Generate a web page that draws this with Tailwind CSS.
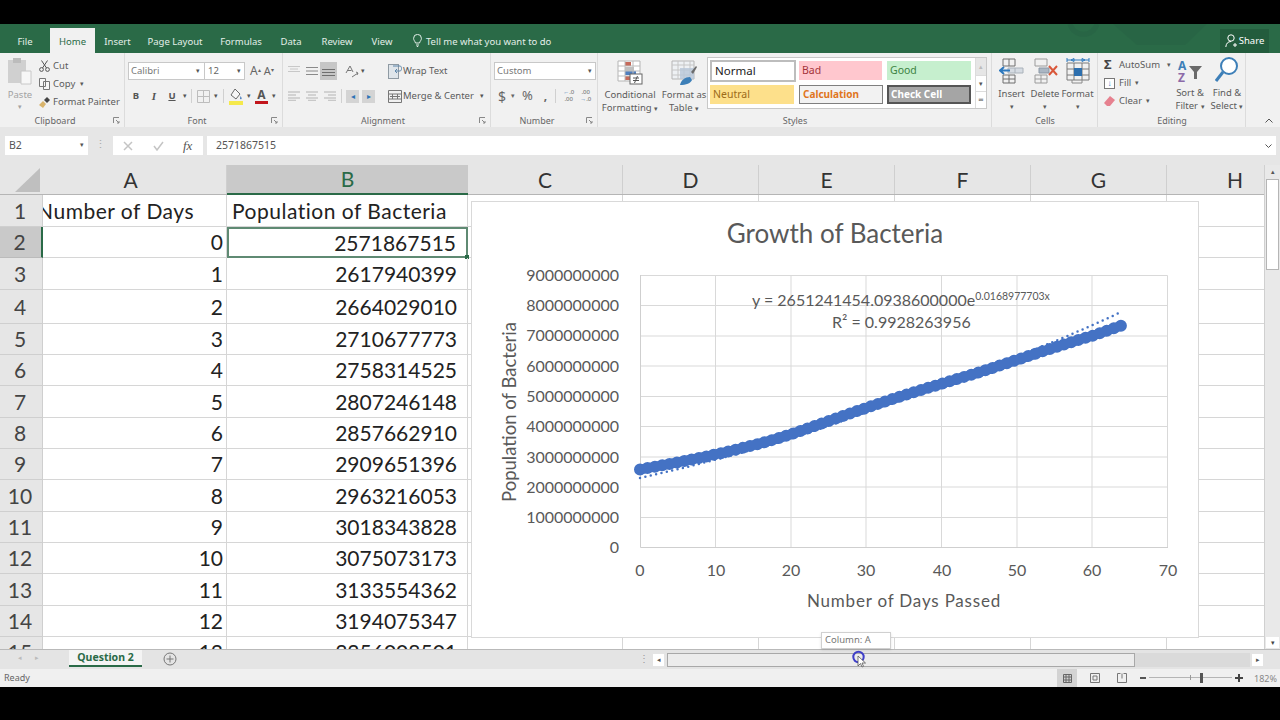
<!DOCTYPE html>
<html lang="en">
<head>
    <meta charset="UTF-8">
    <meta name="viewport" content="width=device-width, initial-scale=1.0">
    <title>Growth of Bacteria - Excel</title>
    <script src="https://cdn.jsdelivr.net/npm/@tailwindcss/browser@4"></script>
</head>
<body class="bg-black">
<div class="relative w-[1280px] h-[720px] overflow-hidden flex flex-col bg-black font-['Noto_Sans',sans-serif] text-[9.5px] text-[#555]">
    <div class="h-[24px] shrink-0"></div>

    <!-- tabs -->
    <div class="relative h-[29px] shrink-0 bg-[#2a6a47] flex text-[#e4efe9] text-[9.5px] overflow-hidden">
        <svg class="absolute left-[1000px] top-0 w-[280px] h-[29px]" viewBox="0 0 280 29" fill="none"><path d="M70 0a14 14 0 0 0 27 0" stroke="#286545" stroke-width="5"/><path d="M113 0l24 21h48l22-21z" fill="#286545"/></svg>
        <div class="w-[50px] pt-[11px] text-center">File</div>
        <div class="w-[45px] mt-[4px] pt-[7px] text-center bg-[#f1f1f1] text-[#2a6a47]">Home</div>
        <div class="w-[45px] pt-[11px] text-center">Insert</div>
        <div class="w-[70px] pt-[11px] text-center">Page Layout</div>
        <div class="w-[62px] pt-[11px] text-center">Formulas</div>
        <div class="w-[38px] pt-[11px] text-center">Data</div>
        <div class="w-[54px] pt-[11px] text-center">Review</div>
        <div class="w-[36px] pt-[11px] text-center">View</div>
        <div class="ml-[13px] pt-[11px] flex items-start gap-[4px] h-fit">
            <svg class="w-[9px] h-[13px] mt-[-1px]" viewBox="0 0 9 13" fill="none" stroke="#e4efe9"><path d="M2.5 9C2 7 .6 6.500 .6 4.300a3.900 3.900 0 0 1 7.800 0C8.400 6.500 7 7 6.500 9zM3 11h3M3.800 12.500h1.400"/></svg>
            <span class="whitespace-nowrap">Tell me what you want to do</span>
        </div>
        <div class="absolute left-[1220px] top-[5px] w-[49px] h-[24px] bg-[#235c3d] flex items-center justify-center gap-[2px] text-white">
            <svg class="w-[12px] h-[14px]" viewBox="0 0 12 14" fill="none" stroke="#fff"><circle cx="6" cy="4" r="3.200"/><path d="M.8 13c.3-3.500 2.200-5.500 5.200-5.500M8 11h4M10 9v4"/></svg>
            <span>Share</span>
        </div>
    </div>

    <!-- ribbon -->
    <div class="relative h-[74px] shrink-0 bg-[#f1f1f1] flex">
        <!-- clipboard -->
        <div class="relative w-[125px] h-full border-r border-[#dcdcdc] flex flex-col">
            <div class="flex h-[60px]">
                <div class="w-[39px] flex flex-col items-center pt-[5px] pl-[1px] text-[#a3a3a3]">
                    <svg class="w-[24px] h-[27px]" viewBox="0 0 24 27"><rect x="0" y="2" width="18" height="23" fill="#d0d0d0"/><rect x="5" y="0" width="8" height="5" fill="#bcbcbc"/><path d="M13 13h10v13H13z" fill="#f7f7f7" stroke="#c8c8c8"/></svg>
                    <span class="mt-[3px] leading-[13px]">Paste</span>
                    <span class="text-[7px] leading-[12px]">▾</span>
                </div>
                <div class="flex flex-col pt-[4px] text-[#5b5b5b]">
                    <div class="h-[18px] flex items-center gap-[3px]"><svg class="w-[11px] h-[12px]" viewBox="0 0 11 12" fill="none" stroke="#555"><circle cx="2.500" cy="9.500" r="1.900"/><circle cx="8.500" cy="9.500" r="1.900"/><path d="M3.500 8L8.500 .5M7.500 8L2.500 .5"/></svg>Cut</div>
                    <div class="h-[18px] flex items-center gap-[3px]"><svg class="w-[11px] h-[12px]" viewBox="0 0 11 12" fill="#f7f7f7" stroke="#777"><path d="M.5.5h6v8h-6zM4.500 3.500h6v8h-6z"/></svg>Copy <span class="text-[7px] ml-[2px]">▾</span></div>
                    <div class="h-[18px] flex items-center gap-[3px]"><svg class="w-[11px] h-[11px]" viewBox="0 0 11 11"><path d="M0 8l4-4 3 3-3 4z" fill="#d9b46c"/><path d="M5 3l3-3 3 3-3 3z" fill="#444"/></svg>Format Painter</div>
                </div>
            </div>
            <div class="absolute left-0 w-[110px] top-[61px] text-center text-[9px] text-[#666]">Clipboard</div>
            <svg class="absolute right-[4px] top-[64px] w-[7px] h-[7px]" viewBox="0 0 7 7" fill="none" stroke="#888"><path d="M.5 6V.5H6M3 3l3 3M6 4v2H4"/></svg>
        </div>

        <!-- font -->
        <div class="relative w-[158px] h-full border-r border-[#dcdcdc] pl-[3px]">
            <div class="flex items-center mt-[9px] h-[18px]">
                <div class="w-[77px] h-[18px] bg-white border border-[#c8c8c8] flex items-center justify-between px-[2px] text-[#777]"><span>Calibri</span><span class="text-[7px] text-[#555] mr-[2px]">▾</span></div>
                <div class="w-[40px] h-[18px] bg-white border border-l-0 border-[#c8c8c8] flex items-center justify-between px-[3px] text-[#666]"><span>12</span><span class="text-[7px] text-[#555]">▾</span></div>
                <span class="ml-[5px] text-[12px] text-[#666]">A<sup class="text-[6px]">▴</sup></span>
                <span class="ml-[3px] text-[11px] text-[#666]">A<sup class="text-[6px]">▾</sup></span>
            </div>
            <div class="flex items-center mt-[7px] h-[18px] text-[#555]">
                <span class="w-[12px] ml-[2px] text-center font-bold">B</span>
                <span class="w-[12px] ml-[6px] text-center italic font-bold font-['Liberation_Serif',serif] text-[11px]">I</span>
                <span class="w-[12px] ml-[6px] text-center font-bold underline">U</span>
                <span class="w-[9px] ml-[2px] text-center text-[7px]">▾</span>
                <span class="w-px h-[14px] ml-[2px] bg-[#d0d0d0]"></span>
                <svg class="w-[13px] h-[13px] ml-[5px]" viewBox="0 0 13 13" fill="none" stroke="#bdbdbd"><path d="M.5.5h12v12H.5zM6.500.5v12M.5 6.500h12"/></svg>
                <span class="w-[9px] ml-[1px] text-center text-[7px]">▾</span>
                <span class="w-px h-[14px] ml-[3px] bg-[#d0d0d0]"></span>
                <svg class="w-[14px] h-[17px] ml-[5px]" viewBox="0 0 14 17"><path d="M6 1l5 5-4 5-5-4z" fill="#f6f6f6" stroke="#6a6a6a"/><path d="M11.500 8c1 1.500 1.500 2.200 1 3-.6.600-1.600.2-1.500-.8z" fill="#4f80bf"/><rect y="13" width="14" height="4" fill="#f5e94b"/></svg>
                <span class="w-[9px] ml-[1px] text-center text-[7px]">▾</span>
                <div class="w-[13px] ml-[2px] flex flex-col items-center leading-[12px] text-[12px] font-bold text-[#555]">A<span class="w-[13px] h-[3px] bg-[#c2161c]"></span></div>
                <span class="w-[9px] ml-[1px] text-center text-[7px]">▾</span>
            </div>
            <div class="absolute left-0 w-[144px] top-[61px] text-center text-[9px] text-[#666]">Font</div>
            <svg class="absolute right-[4px] top-[64px] w-[7px] h-[7px]" viewBox="0 0 7 7" fill="none" stroke="#888"><path d="M.5 6V.5H6M3 3l3 3M6 4v2H4"/></svg>
        </div>

        <!-- alignment -->
        <div class="relative w-[208px] h-full border-r border-[#dcdcdc] pl-[4px]">
            <div class="flex items-center mt-[9px] h-[18px]">
                <svg class="w-[14px] h-[10px]" viewBox="0 0 14 10" stroke="#c8c8c8"><path d="M1 .5h12M3 3h8M1 5.500h12"/></svg>
                <svg class="w-[14px] h-[10px] ml-[4px]" viewBox="0 0 14 10" stroke="#8a8a8a"><path d="M1 1.500h12M1 5h12M1 8.500h12"/></svg>
                <div class="w-[17px] h-[18px] ml-[1px] bg-[#c6c6c6] flex items-center justify-center"><svg class="w-[13px] h-[10px]" viewBox="0 0 13 10" stroke="#6f6f6f"><path d="M0 3.500h13M0 6.500h13M0 9.500h13"/></svg></div>
                <svg class="w-[14px] h-[13px] ml-[8px]" viewBox="0 0 14 13" fill="none" stroke="#777"><path d="M1 8l4-7 3 6M2.500 5.500h4M7 12l6-4M11 7l2 1-1 2" /></svg>
                <span class="text-[7px] ml-[2px]">▾</span>
                <svg class="w-[14px] h-[15px] ml-[23px]" viewBox="0 0 14 15" fill="#dfe5ea" stroke="#8f9aa3"><rect x=".5" y=".5" width="10" height="14"/><path d="M5 2h7c2 0 2 5 0 5H7l2-2M7 7l2 2" fill="none" stroke="#5e86aa"/></svg>
                <span class="ml-[1px] text-[#5b5b5b]">Wrap Text</span>
            </div>
            <div class="flex items-center mt-[7px] h-[18px]">
                <svg class="w-[14px] h-[10px]" viewBox="0 0 14 10" stroke="#c8c8c8" stroke-width="1.500"><path d="M1 1h12M1 4h8M1 7h12M1 9.500h8"/></svg>
                <svg class="w-[14px] h-[10px] ml-[4px]" viewBox="0 0 14 10" stroke="#c8c8c8" stroke-width="1.500"><path d="M1 1h12M3 4h8M1 7h12M3 9.500h8"/></svg>
                <svg class="w-[14px] h-[10px] ml-[4px]" viewBox="0 0 14 10" stroke="#c8c8c8" stroke-width="1.500"><path d="M1 1h12M5 4h8M1 7h12M5 9.500h8"/></svg>
                <span class="w-px h-[14px] ml-[4px] bg-[#d0d0d0]"></span>
                <div class="w-[13px] h-[13px] ml-[4px] bg-[#d4d4d4] flex items-center justify-center text-[8px] text-[#2d73b6]">◂</div>
                <div class="w-[13px] h-[13px] ml-[3px] bg-[#d4d4d4] flex items-center justify-center text-[8px] text-[#2d73b6]">▸</div>
                <svg class="w-[14px] h-[13px] ml-[13px]" viewBox="0 0 14 13" fill="none" stroke="#777"><path d="M.5.5h13v12H.5zM.5 4h13M.5 9h13M4.500 4v5M9.500 4v5M2 6.500h10"/></svg>
                <span class="ml-[1px] text-[#5b5b5b] whitespace-nowrap">Merge &amp; Center</span>
                <span class="text-[7px] ml-[6px]">▾</span>
            </div>
            <div class="absolute left-0 w-[200px] top-[61px] text-center text-[9px] text-[#666]">Alignment</div>
            <svg class="absolute right-[4px] top-[64px] w-[7px] h-[7px]" viewBox="0 0 7 7" fill="none" stroke="#888"><path d="M.5 6V.5H6M3 3l3 3M6 4v2H4"/></svg>
        </div>

        <!-- number -->
        <div class="relative w-[107px] h-full border-r border-[#dcdcdc] pl-[3px]">
            <div class="w-[102px] h-[18px] mt-[9px] bg-white border border-[#c8c8c8] flex items-center justify-between px-[2px] text-[#777]"><span>Custom</span><span class="text-[7px] text-[#555] mr-[1px]">▾</span></div>
            <div class="flex items-center mt-[7px] h-[18px] text-[#666]">
                <span class="ml-[4px] text-[14px]">$</span>
                <span class="ml-[5px] text-[7px]">▾</span>
                <span class="ml-[7px] text-[13px]">%</span>
                <span class="ml-[11px] text-[12px] font-bold leading-[10px]">,</span>
                <span class="w-px h-[14px] ml-[8px] bg-[#d0d0d0]"></span>
                <span class="ml-[7px] w-[11px] text-[6px] leading-[7px] text-center whitespace-nowrap"><span class="text-[#3f78b4]">←</span>.0<br>.00</span>
                <span class="ml-[6px] w-[11px] text-[6px] leading-[7px] text-center whitespace-nowrap">.00<br><span class="text-[#3f78b4]">→</span>.0</span>
            </div>
            <div class="absolute left-0 w-[92px] top-[61px] text-center text-[9px] text-[#666]">Number</div>
            <svg class="absolute right-[4px] top-[64px] w-[7px] h-[7px]" viewBox="0 0 7 7" fill="none" stroke="#888"><path d="M.5 6V.5H6M3 3l3 3M6 4v2H4"/></svg>
        </div>

        <!-- styles -->
        <div class="relative w-[394px] h-full border-r border-[#dcdcdc] flex">
            <div class="w-[60px] flex flex-col items-center pt-[7px] ml-[2px] text-[#5b5b5b] leading-[13px] text-center">
                <svg class="w-[26px] h-[25px]" viewBox="0 0 26 25"><path d="M1 1h22v20H1z" fill="#fff" stroke="#b5b5b5"/><rect x="8" y="2" width="6" height="4" fill="#c66a5a"/><rect x="8" y="7" width="9" height="4" fill="#c0c0c0"/><rect x="8" y="11" width="11" height="4" fill="#4f7fbf"/><rect x="8" y="16" width="5" height="4" fill="#c66a5a"/><path d="M8 1v20M16 1v20M1 6h22M1 11h22M1 16h22" stroke="#bdbdbd" fill="none"/><rect x="13" y="14" width="12" height="10" fill="#fff" stroke="#666"/><path d="M16 18h6M16 20.500h6M20.500 16l-3 7" stroke="#555"/></svg>
                <span class="mt-[3px]">Conditional</span>
                <span class="whitespace-nowrap">Formatting <span class="text-[7px]">▾</span></span>
            </div>
            <div class="w-[48px] flex flex-col items-center pt-[7px] text-[#5b5b5b] leading-[13px] text-center">
                <svg class="w-[26px] h-[25px]" viewBox="0 0 26 25"><path d="M1 1h22v18H1z" fill="#eef1f4" stroke="#b5b5b5"/><path d="M1 5h22M1 10h22M1 15h22M7 1v18M13 1v18M19 1v18" stroke="#c6c6c6"/><path d="M9 8h14v11H9z" fill="#b8c7d8" opacity=".8"/><path d="M20 12l5-6 1 1-4 7z" fill="#6b6b6b"/><path d="M9 25c1-5 5-8 10-8l2 3c-1 3-6 5-12 5z" fill="#3d7fb8"/></svg>
                <span class="mt-[3px] whitespace-nowrap">Format as</span>
                <span class="whitespace-nowrap">Table <span class="text-[7px]">▾</span></span>
            </div>
            <div class="w-[280px] h-[52px] mt-[4px] ml-[-1px] bg-white border border-[#c8c8c8] pl-[2px] flex">
                <div class="w-[266px] grid grid-cols-[90px_88px_84px] grid-rows-[26px_24px] pt-[2px] text-[11.500px]">
                    <div class="w-[86px] h-[22px] border-2 border-[#bdbdbd] flex items-center pl-[3px] text-[#222]">Normal</div>
                    <div class="w-[83px] h-[19px] mt-[1px] ml-[-1px] bg-[#ffc7ce] flex items-center pl-[3px] text-[#a4343a] text-[10.500px]">Bad</div>
                    <div class="w-[84px] h-[19px] mt-[1px] ml-[-1px] bg-[#c6efce] flex items-center pl-[3px] text-[#3c8242] text-[10.500px]">Good</div>
                    <div class="w-[84px] h-[19px] mt-[-1px] bg-[#fde08b] flex items-center pl-[3px] text-[#9c6b19] text-[10.500px]">Neutral</div>
                    <div class="w-[84px] h-[19px] mt-[-1px] ml-[-1px] bg-[#f2f2f2] border border-[#7f7f7f] flex items-center pl-[3px] text-[#e0761e] text-[10px] font-bold">Calculation</div>
                    <div class="w-[84px] h-[19px] mt-[-1px] ml-[-1px] bg-[#a5a5a5] border-2 border-double border-[#555] flex items-center pl-[2px] text-white text-[10px] font-bold">Check Cell</div>
                </div>
                <div class="w-[11px] h-full ml-auto flex flex-col text-[7px] text-center text-[#555] border-l border-[#dcdcdc]">
                    <span class="h-[17px] bg-[#e6e6e6] text-[#bbb] leading-[17px]">▴</span>
                    <span class="h-[17px] border-y border-[#dcdcdc] leading-[15px]">▾</span>
                    <span class="h-[16px] leading-[16px]">≂</span>
                </div>
            </div>
            <div class="absolute left-0 w-[394px] top-[61px] text-center text-[9px] text-[#666]">Styles</div>
        </div>

        <!-- cells -->
        <div class="relative w-[106px] h-full border-r border-[#dcdcdc] flex text-[#5b5b5b] leading-[13px] text-center">
            <div class="w-[35px] ml-[2px] flex flex-col items-center pt-[5px]">
                <svg class="w-[25px] h-[26px]" viewBox="0 0 25 26" fill="none"><path d="M4 1h12v7H4zM4 17h12v8H4zM4 21h12M10 17v8M10 1v7" stroke="#6f6f6f"/><path d="M9 10h15v5H9zM16 10v5" fill="#d5dbe2" stroke="#aab2ba"/><path d="M11 12.500H1M5 9l-4 3.500L5 16" stroke="#2d78bd" stroke-width="2"/></svg>
                <span class="mt-[3px]">Insert</span><span class="text-[7px] leading-[14px]">▾</span>
            </div>
            <div class="w-[32px] flex flex-col items-center pt-[5px]">
                <svg class="w-[25px] h-[26px]" viewBox="0 0 25 26" fill="none"><path d="M2 1h12v7H2zM2 17h12v8H2zM2 21h12M8 17v8" stroke="#9b9b9b"/><path d="M6 10h10v5H6z" fill="#aab6c3" stroke="#8a97a5"/><path d="M16 8l8 9M24 8l-8 9" stroke="#d9573a" stroke-width="2"/></svg>
                <span class="mt-[3px]">Delete</span><span class="text-[7px] leading-[14px]">▾</span>
            </div>
            <div class="w-[33px] flex flex-col items-center pt-[4px]">
                <svg class="w-[24px] h-[27px]" viewBox="0 0 24 27" fill="none"><path d="M1 3h22M1 1v4M23 1v4M5 3l3-1.500v3zM19 3l-3-1.500v3z" stroke="#2d78bd"/><path d="M1 6h22v17H1zM1 12h22M1 18h22M8 6v17M16 6v17" stroke="#7a7a7a"/><rect x="8" y="11" width="8" height="8" fill="#2d6fae"/><path d="M6 23v3h10v-3" stroke="#8a8a8a"/></svg>
                <span class="mt-[3px]">Format</span><span class="text-[7px] leading-[14px]">▾</span>
            </div>
            <div class="absolute left-0 w-[106px] top-[61px] text-center text-[9px] text-[#666]">Cells</div>
        </div>

        <!-- editing -->
        <div class="relative w-[148px] h-full border-r border-[#dcdcdc] flex text-[#5b5b5b]">
            <div class="w-[75px] pl-[6px] pt-[3px]">
                <div class="h-[18px] flex items-center gap-[4px] whitespace-nowrap"><span class="text-[13px] font-bold text-[#444] w-[11px]">Σ</span>AutoSum<span class="text-[7px] ml-[3px]">▾</span></div>
                <div class="h-[18px] flex items-center gap-[4px] whitespace-nowrap"><span class="w-[11px] h-[11px] border border-[#777] bg-white flex items-center justify-center text-[8px] leading-none text-[#2d78bd]">↓</span>Fill <span class="text-[7px]">▾</span></div>
                <div class="h-[18px] flex items-center gap-[4px] whitespace-nowrap"><svg class="w-[11px] h-[10px]" viewBox="0 0 11 10"><path d="M0 7l6-7 5 4-5 6H3z" fill="#e6818f"/></svg>Clear <span class="text-[7px]">▾</span></div>
            </div>
            <div class="w-[36px] ml-[-1px] flex flex-col items-center pt-[6px] leading-[13px] text-center">
                <svg class="w-[24px] h-[25px] overflow-visible" viewBox="0 0 24 25"><text x="0" y="10.500" class="text-[12px] fill-[#3d7fb8] font-bold">A</text><text x="0" y="23" class="text-[12px] fill-[#8c6aa8] font-bold">Z</text><path d="M11 7h13l-5 6v7h-3v-7z" fill="#6a6a6a"/></svg>
                <span class="mt-[2px] whitespace-nowrap">Sort &amp;</span>
                <span class="whitespace-nowrap">Filter <span class="text-[7px]">▾</span></span>
            </div>
            <div class="w-[36px] ml-[1px] flex flex-col items-center pt-[3px] leading-[13px] text-center">
                <svg class="w-[24px] h-[28px]" viewBox="0 0 24 28" fill="none"><circle cx="14" cy="10" r="8" stroke="#3d7fb8" stroke-width="2" fill="#fff"/><path d="M8 16L1 25" stroke="#3d7fb8" stroke-width="3"/></svg>
                <span class="mt-[2px] whitespace-nowrap">Find &amp;</span>
                <span class="whitespace-nowrap">Select <span class="text-[7px]">▾</span></span>
            </div>
            <div class="absolute left-0 w-[148px] top-[61px] text-center text-[9px] text-[#666]">Editing</div>
        </div>
        <svg class="absolute left-[1265px] top-[65px] w-[8px] h-[5px]" viewBox="0 0 8 5" fill="none" stroke="#555"><path d="M.5 4.500L4 1l3.500 3.500"/></svg>
    </div>

    <!-- formula bar -->
    <div class="h-[38px] shrink-0 bg-[#e6e6e6] flex pt-[9px] text-[10.500px] text-[#555]">
        <div class="w-[83px] h-[19px] ml-[5px] bg-white flex items-center justify-between px-[4px]"><span>B2</span><span class="text-[7px]">▾</span></div>
        <div class="w-[25px] text-center leading-[17px] text-[#aaa]">⋮</div>
        <div class="w-[90px] h-[19px] bg-white flex items-center text-[#c4c4c4]">
            <svg class="w-[10px] h-[10px] ml-[10px]" viewBox="0 0 10 10" fill="none" stroke="#c4c4c4" stroke-width="1.500"><path d="M1 1l8 8M9 1l-8 8"/></svg>
            <svg class="w-[11px] h-[10px] ml-[20px]" viewBox="0 0 11 10" fill="none" stroke="#c4c4c4" stroke-width="1.500"><path d="M1 5l3 4 6-8"/></svg>
            <span class="ml-[19px] text-[13px] italic font-['Liberation_Serif',serif] text-[#555]">fx</span>
        </div>
        <div class="w-[1069px] h-[19px] ml-[4px] bg-white flex items-center justify-between pl-[9px] pr-[4px]"><span>2571867515</span><svg class="w-[7px] h-[4px]" viewBox="0 0 7 4" fill="none" stroke="#555"><path d="M.5.5L3.500 3.500 6.500.5"/></svg></div>
    </div>

    <!-- sheet -->
    <div class="h-[484px] shrink-0 flex bg-white">
        <div class="w-[1264px] h-full overflow-hidden font-['Lato',sans-serif] text-[21px] text-[#222]">
            <div class="flex h-[30px] bg-[#e6e6e6] text-[#333] border-b border-[#b5b5b5]">
                <div class="w-[43px] h-full shrink-0 pl-[15px] pt-[3px]">
                    <svg class="w-[25px] h-[24px]" viewBox="0 0 25 24"><path d="M25 0v24H0z" fill="#bfbfbf"/></svg>
                </div>
                <div class="w-[184px] shrink-0 flex items-center justify-center pr-[8px] border-r border-[#cfcfcf]">A</div>
                <div class="w-[241px] shrink-0 flex items-center justify-center bg-[#c9c9c9] text-[#2a6a47] border-b-2 border-[#2a6a47] h-[30px]">B</div>
                <div class="w-[155px] shrink-0 flex items-center justify-center border-r border-[#cfcfcf]">C</div>
                <div class="w-[136px] shrink-0 flex items-center justify-center border-r border-[#cfcfcf]">D</div>
                <div class="w-[136px] shrink-0 flex items-center justify-center border-r border-[#cfcfcf]">E</div>
                <div class="w-[136px] shrink-0 flex items-center justify-center border-r border-[#cfcfcf]">F</div>
                <div class="w-[136px] shrink-0 flex items-center justify-center border-r border-[#cfcfcf]">G</div>
                <div class="w-[136px] shrink-0 flex items-center justify-center">H</div>
            </div>
            <div id="rows"></div>
        </div>
        <!-- vertical scrollbar -->
        <div class="w-[16px] h-full bg-[#e9e9e9] flex flex-col items-center border-l border-[#d0d0d0]">
            <div class="h-[14px] text-[7px] leading-[14px] text-[#555]">▴</div>
            <div class="w-[13px] h-[91px] bg-white border border-[#b5b5b5]"></div>
            <div class="mt-auto w-[13px] h-[11px] mb-[1px] bg-white text-[7px] leading-[11px] text-center text-[#444]">▾</div>
        </div>
    </div>

    <!-- sheet tabs -->
    <div class="h-[20px] shrink-0 bg-[#e4e4e4] border-t border-[#b9b9b9] flex items-start relative">
        <span class="ml-[18px] mt-[3px] text-[7px] text-[#bbb]">◂</span>
        <span class="ml-[13px] mt-[3px] text-[7px] text-[#bbb]">▸</span>
        <div class="ml-[30px] w-[73px] h-[17px] bg-[#f4f4f4] border-b-2 border-[#2a6a47] flex items-center justify-center font-bold text-[#2a6a47] text-[10.500px]">Question 2</div>
        <svg class="ml-[21px] mt-[2px] w-[14px] h-[14px]" viewBox="0 0 14 14" fill="none" stroke="#777"><circle cx="7" cy="7" r="6"/><path d="M7 3.500v7M3.500 7h7"/></svg>
        <span class="absolute left-[639px] top-[2px] leading-[14px] text-[#999]">⋮</span>
        <div class="absolute left-[653px] top-[4px] w-[11px] h-[12px] bg-white text-[7px] leading-[12px] text-center">◂</div>
        <div class="absolute left-[667px] top-[3px] w-[468px] h-[14px] bg-[#ececec] border border-[#a8a8a8]"></div>
        <div class="absolute left-[1135px] top-[3px] w-[115px] h-[14px] bg-[#dadada]"></div>
        <div class="absolute left-[1252px] top-[4px] w-[11px] h-[12px] bg-white text-[7px] leading-[12px] text-center">▸</div>
    </div>

    <!-- status bar -->
    <div class="relative h-[18px] shrink-0 bg-[#f0f0f0] flex items-center pl-[4px] text-[9px] text-[#666]">
        <span>Ready</span>
        <div class="absolute left-[1057px] top-0 w-[20px] h-[18px] bg-[#d3d3d3] flex items-center justify-center"><svg class="w-[9px] h-[9px]" viewBox="0 0 9 9" fill="none" stroke="#666"><path d="M.5.5h8v8h-8zM3 .5v8M6 .5v8M.5 3h8M.5 6h8"/></svg></div>
        <svg class="absolute left-[1090px] top-[4px] w-[10px] h-[10px]" viewBox="0 0 10 10" fill="none" stroke="#777"><path d="M.5.5h9v9h-9zM3 3h4v4H3z"/></svg>
        <svg class="absolute left-[1117px] top-[4px] w-[10px] h-[10px]" viewBox="0 0 10 10" fill="none" stroke="#777"><path d="M.5.5v9h9V.5M.5.5h3M9.500.5h-3M5 .5v5"/></svg>
        <span class="absolute left-[1140px] top-[8px] w-[6px] h-[2px] bg-[#555]"></span>
        <span class="absolute left-[1149px] top-[8px] w-[83px] h-px bg-[#b5b5b5]"></span>
        <span class="absolute left-[1190px] top-[6px] w-px h-[5px] bg-[#999]"></span>
        <span class="absolute left-[1200px] top-[4px] w-[3px] h-[10px] bg-[#555]"></span>
        <span class="absolute left-[1235px] top-[8px] w-[8px] h-[2px] bg-[#444]"></span>
        <span class="absolute left-[1238px] top-[5px] w-[2px] h-[8px] bg-[#444]"></span>
        <span class="absolute left-[1254px] top-[3px] text-[#888]">182%</span>
    </div>

    <!-- chart -->
    <div class="absolute left-[471px] top-[201px] w-[728px] h-[437px] bg-white border border-[#d9d9d9]">
        <svg class="w-[726px] h-[435px] font-['Lato',sans-serif]" viewBox="472 202 726 435" fill="none">
            <path d="M640.500 275.500H1167.500V547.500M640.500 305.500H1167.500M640.500 336H1167.500M640.500 366H1167.500M640.500 396.500H1167.500M640.500 426.500H1167.500M640.500 457H1167.500M640.500 487H1167.500M640.500 517.500H1167.500M715.500 275V548M791 275V548M866 275V548M941.500 275V548M1017 275V548M1092 275V548" stroke="#d9d9d9"/>
            <path d="M640.500 275V547.500H1168" stroke="#cfcfcf"/>
            <path d="M640 478C720 460 800 438 866 412C960 378 1040 350 1119 313" stroke="#4472c4" stroke-width="2.500" stroke-dasharray="0 5.500" stroke-linecap="round"/>
            <path d="M640 469.500C680 462 716 455 750 446C791 436 830 420 866 408C900 396 941 384 980 372C1017 360 1060 345 1092 336L1123 325" stroke="#4472c4" stroke-width="12" stroke-dasharray="0 7.500" stroke-linecap="round"/>
            <path d="M640 469.500C680 462 716 455 750 446C791 436 830 420 866 408C900 396 941 384 980 372C1017 360 1060 345 1092 336L1123 325" stroke="#4472c4" stroke-width="9.500"/>
            <text x="835" y="243" text-anchor="middle" class="text-[26px] fill-[#595959]">Growth of Bacteria</text>
            <g text-anchor="end" class="text-[16px] fill-[#595959]">
                <text x="619" y="281">9000000000</text><text x="619" y="311">8000000000</text><text x="619" y="341">7000000000</text><text x="619" y="372">6000000000</text><text x="619" y="402">5000000000</text><text x="619" y="432">4000000000</text><text x="619" y="463">3000000000</text><text x="619" y="493">2000000000</text><text x="619" y="523">1000000000</text><text x="619" y="553">0</text>
            </g>
            <g text-anchor="middle" class="text-[16px] fill-[#595959]">
                <text x="640" y="576">0</text><text x="716" y="576">10</text><text x="791" y="576">20</text><text x="866" y="576">30</text><text x="942" y="576">40</text><text x="1017" y="576">50</text><text x="1092" y="576">60</text><text x="1168" y="576">70</text>
            </g>
            <text x="904" y="607" text-anchor="middle" class="text-[17px] tracking-[0.8px] fill-[#595959]">Number of Days Passed</text>
            <text transform="translate(516 412) rotate(-90)" text-anchor="middle" class="text-[18.500px] fill-[#595959]">Population of Bacteria</text>
            <text x="752" y="306" class="text-[16px] fill-[#595959]">y = 2651241454.0938600000e<tspan dy="-6" class="text-[10.500px]">0.0168977703x</tspan></text>
            <text x="832" y="328" class="text-[16px] fill-[#595959]">R² = 0.9928263956</text>
        </svg>
    </div>

    <!-- drag tooltip and pointer -->
    <div class="absolute left-[821px] top-[632px] w-[70px] h-[17px] bg-white border border-[#d0d0d0] shadow-sm flex items-center pl-[3px] text-[9.500px] text-[#777]">Column: A</div>
    <svg class="absolute left-[850px] top-[649px] w-[18px] h-[20px]" viewBox="0 0 18 20" fill="none">
        <circle cx="8.500" cy="8" r="5.200" stroke="#3f3fc8" stroke-width="2"/>
        <path d="M8 7v10l2.500-2.500 1.500 3.500 1.500-.7-1.500-3.300h3.500z" fill="#fff" stroke="#555" stroke-width=".8"/>
    </svg>
</div>

<script>
    const rows = [
        ['1', 32, 'Number of Days', 'Population of Bacteria'],
        ['2', 31, '0', '2571867515'],
        ['3', 32, '1', '2617940399'],
        ['4', 34, '2', '2664029010'],
        ['5', 31, '3', '2710677773'],
        ['6', 31, '4', '2758314525'],
        ['7', 32, '5', '2807246148'],
        ['8', 31, '6', '2857662910'],
        ['9', 31, '7', '2909651396'],
        ['10', 32, '8', '2963216053'],
        ['11', 31, '9', '3018343828'],
        ['12', 31, '10', '3075073173'],
        ['13', 32, '11', '3133554362'],
        ['14', 31, '12', '3194075347'],
        ['15', 31, '13', '3256008501']
    ];
    const line = 'border-r border-b border-[#d6d6d6]';
    document.getElementById('rows').innerHTML = rows.map(r => {
        const sel = r[0] === '2';
        const head = r[0] === '1';
        return `<div class="flex" style="height:${r[1]}px">
            <div class="w-[43px] shrink-0 flex items-center justify-center pr-[2px] text-[#444] border-b border-r ${sel ? 'bg-[#c9c9c9] border-r-[#2a6a47] border-r-2 border-b-[#bbb]' : 'bg-[#e6e6e6] border-[#cfcfcf]'}">${r[0]}</div>
            <div class="w-[184px] shrink-0 flex items-center justify-end overflow-hidden whitespace-nowrap ${line} ${head ? 'pr-[32px] tracking-[0.5px]' : 'pr-[3px]'}">${r[2]}</div>
            <div class="relative w-[241px] shrink-0 flex items-center whitespace-nowrap ${head ? 'justify-start pl-[5px] tracking-[0.5px]' : 'justify-end pr-[10px]'} ${sel ? 'border-2 border-[#5f8a73]' : line}">${r[3]}${sel ? '<span class="absolute right-[-3px] bottom-[-3px] w-[4px] h-[4px] bg-[#2a6a47]"></span>' : ''}</div>
            <div class="w-[155px] shrink-0 ${line}"></div>
            <div class="w-[136px] shrink-0 ${line}"></div>
            <div class="w-[136px] shrink-0 ${line}"></div>
            <div class="w-[136px] shrink-0 ${line}"></div>
            <div class="w-[136px] shrink-0 ${line}"></div>
            <div class="w-[136px] shrink-0 ${line}"></div>
        </div>`;
    }).join('');
</script>
</body>
</html>
